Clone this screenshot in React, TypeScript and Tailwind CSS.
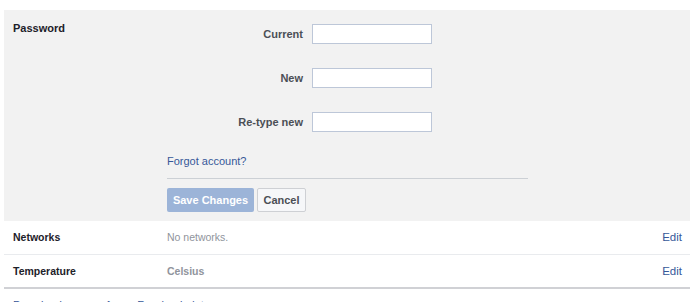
import { useState } from 'react';

const fields = ['Current', 'New', 'Re-type new'];

const SettingRow = ({ label, value, bold, last }: { label: string; value: string; bold?: boolean; last?: boolean }) => (
  <div className={`flex items-center h-[34px] pt-[1px] ${last ? 'border-b-2 border-[#d0d1d5]' : 'border-b border-[#e9ebee]'}`}>
    <div className="w-[163px] pl-[9px] text-[10.5px] font-bold text-[#1d2129]">{label}</div>
    <div className={`flex-1 text-[10.5px] text-[#90949c] ${bold ? 'font-bold' : ''}`}>{value}</div>
    <a href="#" className="pr-[8px] text-[11.5px] text-[#365899]">Edit</a>
  </div>
);

const App = () => {
  const [values, setValues] = useState<Record<string, string>>({});

  return (
    <div className="w-[695px] h-[302px] overflow-hidden bg-white font-['Liberation_Sans',Arial,sans-serif]">
      <div className="ml-[4px] w-[686px] pt-[10px]">
        {/* Password editor */}
        <div className="flex bg-[#f2f2f2] pt-[14px] pb-[9px]">
          <div className="w-[163px] pl-[9px] -mt-[4px] text-[11px] font-bold text-[#1d2129]">Password</div>
          <div className="flex flex-col">
            {fields.map(f => (
              <div key={f} className="flex items-center h-[20px] mb-[24px]">
                <label className="w-[145px] pr-[9px] text-right text-[11px] font-bold text-[#4b4f56]">{f}</label>
                <input
                  type="password"
                  value={values[f] || ''}
                  onChange={e => setValues({ ...values, [f]: e.target.value })}
                  className="w-[120px] h-[20px] bg-white border border-[#bdc7d8] outline-none"
                />
              </div>
            ))}
            <a href="#" className="-mt-[3px] text-[11px] leading-[16px] text-[#365899]">Forgot account?</a>
            <div className="mt-[9px] w-[361px] h-px bg-[#ccd0d5]"></div>
            <div className="flex gap-[3px] mt-[9px]">
              <button className="w-[87px] h-[24px] rounded-[2px] bg-[#9cb4d8] text-[11px] font-bold text-white">Save Changes</button>
              <button className="w-[49px] h-[24px] rounded-[2px] bg-[#f6f7f9] border border-[#ced0d4] text-[11px] font-bold text-[#4b4f56]">Cancel</button>
            </div>
          </div>
        </div>

        <SettingRow label="Networks" value="No networks." />
        <SettingRow label="Temperature" value="Celsius" bold last />

        <div className="pl-[9px] pt-[8px] text-[11px] leading-[16px] text-[#365899]">Download a copy of your Facebook data.</div>
      </div>
    </div>
  );
};

export default App;
